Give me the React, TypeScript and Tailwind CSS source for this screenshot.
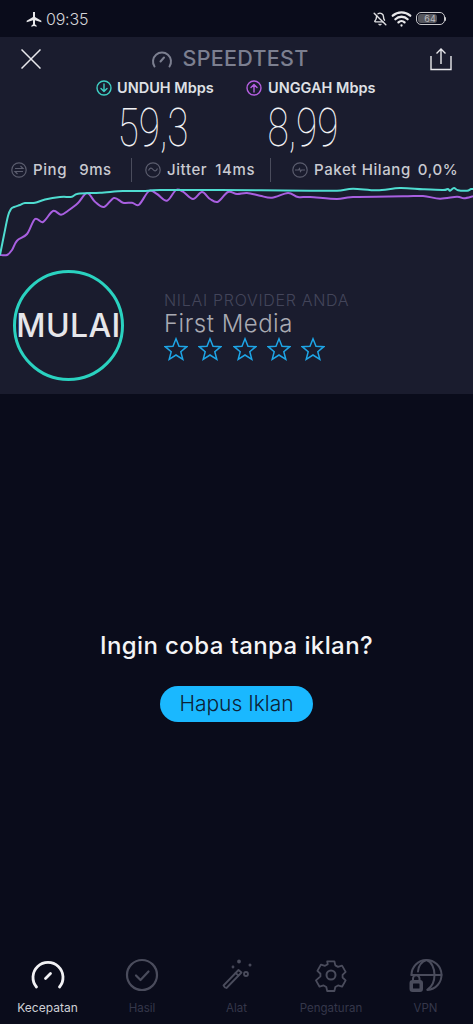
import { BellOff, Wifi } from 'lucide-react';

type Pt = [number, number];

const teal: Pt[] = [[0, 255], [4, 235], [8, 216], [11, 209], [14, 207], [20, 205], [25, 203], [35, 202.7], [45, 199.5], [60, 197], [72, 196.7], [78, 193.7], [100, 192.7], [123, 191], [143, 191], [160, 190], [220, 190], [310, 190.7], [337, 190.7], [353, 188.7], [377, 190.3], [400, 188], [423, 189.3], [443, 190], [448, 189], [450, 190.7], [454, 188], [458, 190.3], [467, 190.7], [471, 189], [473, 189]];
const purple: Pt[] = [[0, 255], [7, 255], [12, 250], [17, 240.7], [27, 234], [35, 219], [43, 222], [53, 211], [61, 214.7], [68, 210.7], [78, 203], [87, 193], [95, 201.7], [104, 207], [114, 198], [123, 202.7], [132, 202.7], [139, 204.7], [149, 191], [157, 194], [167, 200.7], [176, 190], [183, 191.7], [193, 199], [202, 192], [210, 199], [218, 201.7], [228, 192], [237, 194], [247, 193], [260, 195.7], [272, 197.7], [288, 193], [298, 197], [310, 197], [337, 199], [353, 197], [403, 196.3], [423, 196], [440, 198.7], [457, 196.7], [464, 198.3], [473, 196.3]];

// catmull-rom through the sampled points so the lines stay soft
function smooth(pts: Pt[]) {
    let d = `M${pts[0][0]} ${pts[0][1]}`;
    for (let i = 0; i < pts.length - 1; i++) {
        const p0 = pts[Math.max(i - 1, 0)];
        const p1 = pts[i];
        const p2 = pts[i + 1];
        const p3 = pts[Math.min(i + 2, pts.length - 1)];
        const c1x = p1[0] + (p2[0] - p0[0]) / 6;
        const c1y = p1[1] + (p2[1] - p0[1]) / 6;
        const c2x = p2[0] - (p3[0] - p1[0]) / 6;
        const c2y = p2[1] - (p3[1] - p1[1]) / 6;
        d += `C${c1x} ${c1y} ${c2x} ${c2y} ${p2[0]} ${p2[1]}`;
    }
    return d;
}

function Star() {
    return (
        <svg viewBox="0 0 24 24" className="w-[24px] h-[24px]" fill="none" stroke="#1ea5e6" strokeWidth="1.5" strokeLinejoin="miter">
            <path d="M12 1.800l3 7.400 7.800.5-6 5 2 7.600L12 18l-6.800 4.300 2-7.600-6-5 7.800-.5z" />
        </svg>
    );
}

function StatIcon({ d }: { d: string }) {
    return (
        <svg viewBox="0 0 16 16" className="w-[16px] h-[16px] shrink-0" fill="none" stroke="#5b5d6e" strokeWidth="1.2">
            <circle cx="8" cy="8" r="7.2" />
            <path d={d} />
        </svg>
    );
}

function DirIcon({ color, d }: { color: string; d: string }) {
    return (
        <svg viewBox="0 0 16 16" className="w-[16px] h-[16px] shrink-0" fill="none" stroke={color} strokeWidth="1.4" strokeLinecap="round" strokeLinejoin="round">
            <circle cx="8" cy="8" r="7" />
            <path d={d} />
        </svg>
    );
}

function NavItem({ label, active, children }: { label: string; active?: boolean; children: React.ReactNode }) {
    return (
        <div className="w-[94.500px] flex flex-col items-center">
            <div className="h-[34px] flex items-center justify-center">{children}</div>
            <span className={`mt-[9px] leading-[14px] ${active ? 'text-[12px] text-[#cfd0d6]' : 'text-[11.500px] text-[#35374a]'}`}>{label}</span>
        </div>
    );
}

export default function App() {
    return (
        <div className="font-['Inter','Noto_Sans',sans-serif] w-[473px] h-[1024px] flex flex-col bg-[#0a0c1b] overflow-hidden">
            {/* Status bar */}
            <div className="h-[37px] flex items-center pl-[26px] pr-[27px] text-[#d4d4d8]">
                <svg viewBox="0 0 24 24" className="w-[16px] h-[16px]" fill="#e8e8ea">
                    <path d="M13.500 1.500h-3V9L1 14.500V17l9.500-3v6L8 22v1.500l4-1 4 1V22l-2.500-2v-6l9.500 3v-2.500L13.500 9z" />
                </svg>
                <span className="ml-[4px] text-[16px] leading-none font-light tracking-[-0.2px]">09:35</span>
                <div className="ml-auto flex items-center">
                    <BellOff size={14} strokeWidth={2.4} className="text-[#e0e0e3]" />
                    <Wifi size={21} strokeWidth={2.6} className="ml-[4px] text-[#e8e8ea]" />
                    <div className="ml-[4px] flex items-center">
                        <div className="w-[29px] h-[13px] rounded-[5px] border border-[#c8c8cc] p-[1px] relative">
                            <div className="w-[19px] h-full bg-[#55565d] rounded-[3px]" />
                            <span className="absolute inset-0 flex items-center justify-center text-[9px] text-[#b9b9bd]">64</span>
                        </div>
                        <div className="w-[1.500px] h-[4px] bg-[#c8c8cc] rounded-r-sm" />
                    </div>
                </div>
            </div>

            {/* Result panel */}
            <div className="h-[357px] bg-[#1a1c2e] flex flex-col">
                <div className="h-[43px] flex items-center px-[21px]">
                    <svg viewBox="0 0 20 20" className="w-[20px] h-[20px]" fill="none" stroke="#e8e8ec" strokeWidth="1.500">
                        <path d="M.5.500l19 19M19.500.500l-19 19" />
                    </svg>
                    <div className="flex-1 flex items-center justify-center mr-[11px]">
                        <svg viewBox="0 0 22 18" className="w-[22px] h-[18px]" fill="none" stroke="#7c7f90" strokeWidth="2" strokeLinecap="round">
                            <path d="M3.500 16.500a9 9 0 1 1 15 0" />
                            <path d="M9.500 11.500l3.500-4" />
                        </svg>
                        <span className="ml-[9px] text-[21.500px] leading-none font-medium text-[#7c7f90] tracking-[0.3px]">SPEEDTEST</span>
                    </div>
                    <svg viewBox="0 0 22 24" className="w-[22px] h-[24px]" fill="none" stroke="#e8e8ec" strokeWidth="1.400">
                        <path d="M1 9v13.500h20V9" />
                        <path d="M11 17V2M6.500 6.500L11 2l4.500 4.500" />
                    </svg>
                </div>

                <div className="h-[16px] flex text-[14.500px] leading-[16px] font-semibold text-[#dfe0e5]">
                    <div className="ml-[96px] w-[150px] flex items-center">
                        <DirIcon color="#3fcfc4" d="M8 4v7.500M5 8.500l3 3 3-3" />
                        <span className="ml-[5px]">UNDUH Mbps</span>
                    </div>
                    <div className="flex items-center">
                        <DirIcon color="#b45fe0" d="M8 12V4.500M5 7.500l3-3 3 3" />
                        <span className="ml-[6px]">UNGGAH Mbps</span>
                    </div>
                </div>

                <div className="h-[50px] mt-[7px] flex text-[#f2f2f5] font-['Roboto',sans-serif] font-thin text-[54px] leading-[50px]">
                    <div className="w-[150px] ml-[78px] flex justify-center scale-x-[0.72]">59,3</div>
                    <div className="w-[150px] flex justify-center scale-x-[0.72]">8,99</div>
                </div>

                <div className="h-[24px] mt-[5px] flex items-center text-[15px] font-medium tracking-[0.6px] text-[#c9cad1]">
                    <div className="ml-[11px] w-[120px] flex items-center">
                        <StatIcon d="M4 6.500h8L9.500 4M12 9.500H4L6.500 12" />
                        <span className="ml-[6px]">Ping</span>
                        <span className="ml-[12px]">9ms</span>
                    </div>
                    <div className="w-px h-[24px] bg-[#4a4c5c]" />
                    <div className="ml-[13px] w-[125px] flex items-center">
                        <StatIcon d="M3.500 8.500c1.500-3 3-3 4.500-1s3 2 4.500-1" />
                        <span className="ml-[6px]">Jitter</span>
                        <span className="ml-[8px]">14ms</span>
                    </div>
                    <div className="w-px h-[24px] bg-[#4a4c5c]" />
                    <div className="ml-[21px] flex items-center">
                        <StatIcon d="M3 8h3.500l1-1.500 1 3 1-1.500H13" />
                        <span className="ml-[6px]">Paket Hilang</span>
                        <span className="ml-[7px]">0,0%</span>
                    </div>
                </div>

                <svg viewBox="0 185 473 75" className="block w-[473px] h-[75px] mt-[3px]" fill="none" strokeWidth="2" strokeLinejoin="round">
                    <path d={smooth(purple)} stroke="#a85fe0" />
                    <path d={smooth(teal)} stroke="#4fdcd0" />
                </svg>

                <div className="flex items-start mt-[10px]">
                    <div className="ml-[13px] w-[111px] h-[111px] rounded-full border-[3px] border-[#2ad2c0] flex items-center justify-center shrink-0">
                        <span className="text-[32px] leading-none font-medium tracking-[0.4px] text-[#e6e6ea]">MULAI</span>
                    </div>
                    <div className="ml-[40px] pt-[21px]">
                        <div className="text-[16px] leading-[18px] font-light tracking-[0.7px] text-[#43455a]">NILAI PROVIDER ANDA</div>
                        <div className="mt-[1px] text-[24px] leading-[28px] font-light tracking-[0.5px] text-[#a9aab2]">First Media</div>
                        <div className="-mt-[1px] flex gap-[10.300px]">
                            <Star />
                            <Star />
                            <Star />
                            <Star />
                            <Star />
                        </div>
                    </div>
                </div>
            </div>

            {/* Ad prompt */}
            <div className="flex-1 flex flex-col items-center pt-[238px]">
                <div className="text-[24px] leading-[28px] font-medium tracking-[0.4px] text-[#f4f4f6]">Ingin coba tanpa iklan?</div>
                <button className="mt-[26px] w-[153px] h-[36px] rounded-full bg-[#1ab8ff] text-[21px] font-light text-[#0c2236]">
                    Hapus Iklan
                </button>
            </div>

            {/* Bottom nav */}
            <div className="h-[66px] flex justify-center shrink-0">
                <NavItem label="Kecepatan" active>
                    <svg viewBox="0 0 34 30" className="w-[34px] h-[30px]" fill="none" stroke="#f2f2f5" strokeWidth="2.800" strokeLinecap="round">
                        <path d="M5.500 27a15 15 0 1 1 23 0" />
                        <path d="M14.500 18.500l5-5" />
                    </svg>
                </NavItem>
                <NavItem label="Hasil">
                    <svg viewBox="0 0 34 34" className="w-[34px] h-[34px]" fill="none" stroke="#4a4c5c" strokeWidth="2.200" strokeLinecap="round" strokeLinejoin="round">
                        <circle cx="17" cy="17" r="15" />
                        <path d="M11 17.500l4.500 4.500 8-8.500" />
                    </svg>
                </NavItem>
                <NavItem label="Alat">
                    <svg viewBox="0 0 34 34" className="w-[34px] h-[34px]" fill="none" stroke="#4a4c5c" strokeWidth="1.800" strokeLinecap="round" strokeLinejoin="round">
                        <path d="M5 29.500l-1.500-2 15-15.500 3 2.500-15 15.500z" />
                        <path d="M15.500 15l3 2.500" />
                        <circle cx="26" cy="16" r="2" />
                        <circle cx="19" cy="3.500" r="1" fill="#4a4c5c" />
                        <circle cx="30" cy="7" r=".6" fill="#4a4c5c" />
                        <circle cx="13" cy="9" r=".5" fill="#4a4c5c" />
                    </svg>
                </NavItem>
                <NavItem label="Pengaturan">
                    <svg viewBox="0 0 34 34" className="w-[34px] h-[34px]" fill="none" stroke="#4a4c5c" strokeWidth="2" strokeLinejoin="round">
                        <path d="M13 2h8l1 4.500 3 1.700 4.500-1.400 4 7-3.400 3.200v3l3.400 3.200-4 7-4.500-1.400-3 1.700-1 4.500h-8l-1-4.500-3-1.700-4.500 1.400-4-7L5.500 18.800v-3L2.100 12.600l4-7 4.500 1.400 3-1.700z" transform="translate(1.500 1.500) scale(.9)" />
                        <circle cx="17" cy="17" r="4.500" />
                    </svg>
                </NavItem>
                <NavItem label="VPN">
                    <svg viewBox="0 0 34 34" className="w-[34px] h-[34px]" fill="none" stroke="#4a4c5c" strokeWidth="2" strokeLinecap="round" strokeLinejoin="round">
                        <path d="M2.500 17a15 15 0 1 1 16 15" />
                        <path d="M2.500 17h30M9 13.500C9.500 8 12.500 3.500 17.500 2c5 1.500 8 8 8 15s-3 12-7 14.500" />
                        <rect x="1.500" y="23" width="11.500" height="10" rx="2" fill="#4a4c5c" />
                        <path d="M4 23v-2.500a3.200 3.200 0 0 1 6.500 0V23" />
                        <rect x="4" y="25.500" width="6.500" height="5" rx=".5" fill="#0a0c1b" stroke="none" />
                    </svg>
                </NavItem>
            </div>
        </div>
    );
}
